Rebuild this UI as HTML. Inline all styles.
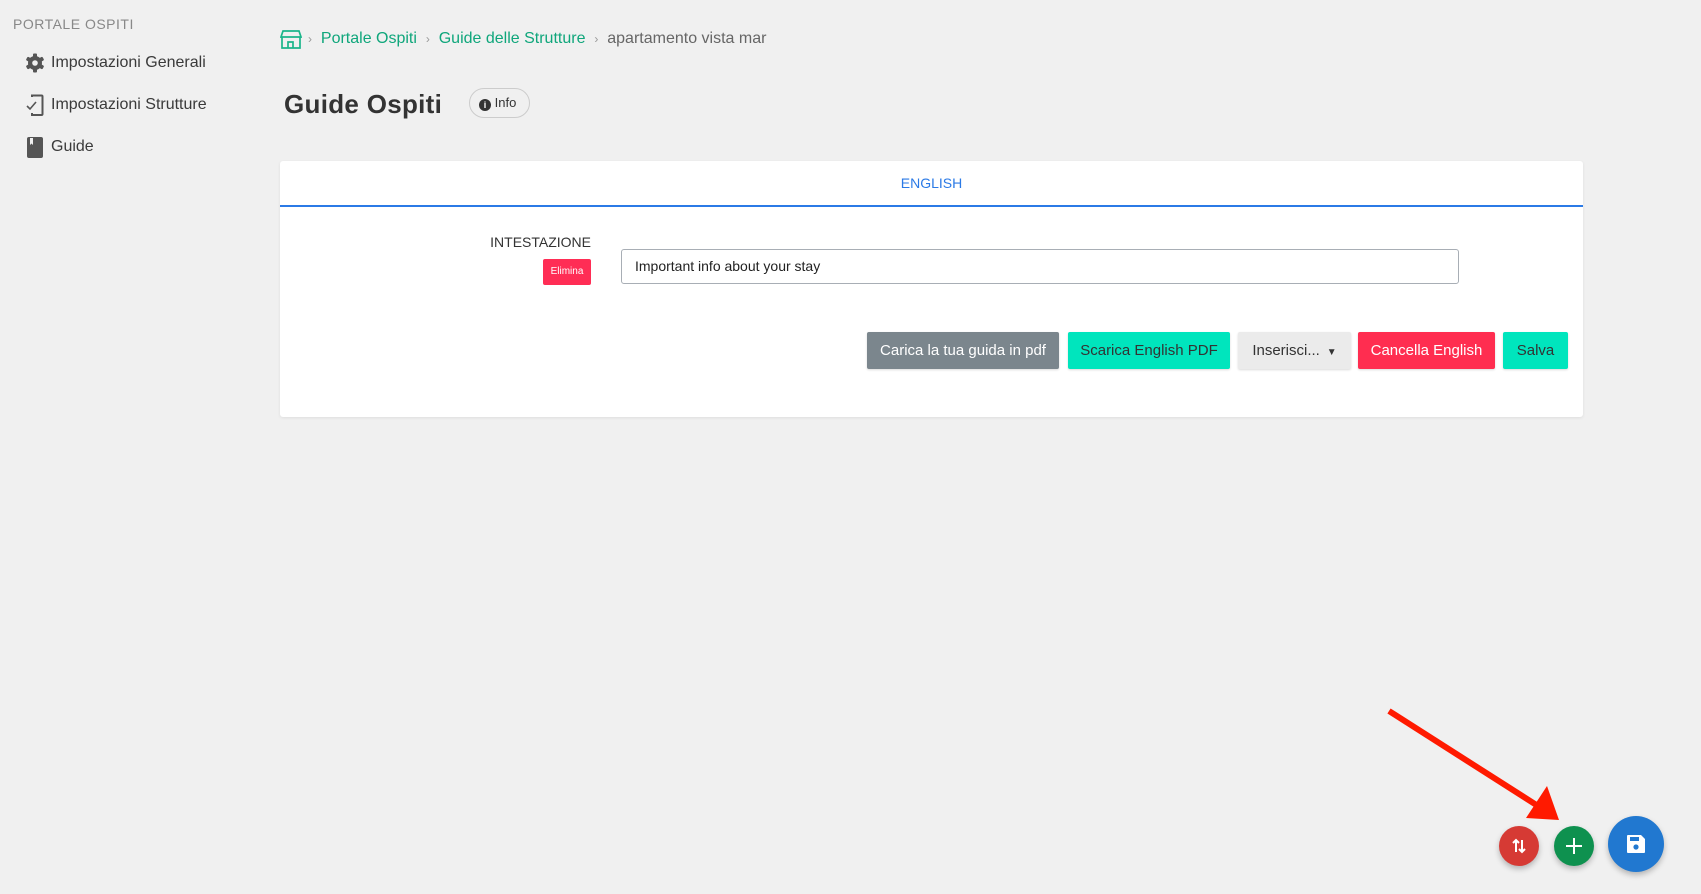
<!DOCTYPE html>
<html><head><meta charset="utf-8"><style>
*{box-sizing:border-box;margin:0;padding:0}
body{width:1701px;height:894px;background:#f0f0f0;font-family:"Liberation Sans",sans-serif;position:relative;overflow:hidden;color:#444}
.a{position:absolute}
.side{font-size:16px;color:#3a3a3a}
.btn{position:absolute;top:332px;height:37px;line-height:37px;text-align:center;font-size:15px;border-radius:2px;box-shadow:0 1px 2px rgba(0,0,0,.15)}
.fab{position:absolute;border-radius:50%;box-shadow:0 3px 6px rgba(0,0,0,.25);display:flex;align-items:center;justify-content:center}
</style></head><body>
<div class="a" style="left:13px;top:16px;font-size:14px;color:#888;letter-spacing:.5px">PORTALE OSPITI</div>
<svg class="a" style="left:25px;top:53px" width="20" height="20" viewBox="0 0 20 20"><g fill="#555"><circle cx="10" cy="10" r="7"/><rect x="8" y="0.5" width="4" height="19" rx="1"/><rect x="8" y="0.5" width="4" height="19" rx="1" transform="rotate(60 10 10)"/><rect x="8" y="0.5" width="4" height="19" rx="1" transform="rotate(120 10 10)"/></g><circle cx="10" cy="10" r="2.8" fill="#f0f0f0"/></svg>
<div class="a side" style="left:51px;top:54px">Impostazioni Generali</div>
<svg class="a" style="left:25px;top:94px" width="20" height="22" viewBox="0 0 20 22"><path d="M7 3V1.5h9.5a1 1 0 0 1 1 1V20a1 1 0 0 1-1 1H7V19" fill="none" stroke="#555" stroke-width="2"/><path d="M2 12l3 3 6-7" fill="none" stroke="#555" stroke-width="1.6"/></svg>
<div class="a side" style="left:51px;top:96px">Impostazioni Strutture</div>
<svg class="a" style="left:26px;top:137px" width="18" height="21" viewBox="0 0 18 21"><rect x="1" y="0" width="16" height="21" rx="2" fill="#555"/><path d="M4 1v7l1.5-1.5L7 8V1z" fill="#f0f0f0"/></svg>
<div class="a side" style="left:51px;top:138px">Guide</div>

<svg class="a" style="left:280px;top:30px" width="22" height="19" viewBox="0 0 22 19"><path d="M3 1h16l2 6H1z M2 7v11h18V7 M8 18v-6h5v6" fill="none" stroke="#1bb58a" stroke-width="1.7"/></svg>
<div class="a" style="top:30px;left:308px;font-size:16px;white-space:nowrap"><span style="color:#999;font-size:12px">›</span>&nbsp;&nbsp;<span style="color:#0fa67b">Portale Ospiti</span>&nbsp;&nbsp;<span style="color:#999;font-size:12px">›</span>&nbsp;&nbsp;<span style="color:#0fa67b">Guide delle Strutture</span>&nbsp;&nbsp;<span style="color:#999;font-size:12px">›</span>&nbsp;&nbsp;<span style="color:#666">apartamento vista mar</span></div>

<div class="a" style="left:284px;top:89px;font-size:26px;font-weight:bold;color:#333;letter-spacing:.3px">Guide Ospiti</div>
<div class="a" style="left:469px;top:88px;width:61px;height:30px;border:1px solid #ccc;border-radius:15px;font-size:13px;line-height:28px;padding-left:9px;color:#333"><span style="display:inline-block;width:12px;height:12px;border-radius:50%;background:#333;color:#fff;font-size:9px;line-height:12px;text-align:center;font-weight:bold;vertical-align:-1px">i</span> Info</div>

<div class="a" style="left:280px;top:161px;width:1303px;height:256px;background:#fff;border-radius:3px;box-shadow:0 1px 3px rgba(0,0,0,.08)">
 <div class="a" style="left:0;top:0;width:1303px;height:46px;border-bottom:2px solid #2b7ae6;text-align:center;line-height:45px;color:#2b7ae6;font-size:14px">ENGLISH</div>
 <div class="a" style="right:992px;top:73px;font-size:14px;color:#333">INTESTAZIONE</div>
 <div class="a" style="left:263px;top:98px;width:48px;height:26px;background:#ff2d55;color:#fff;font-size:10px;line-height:26px;text-align:center;border-radius:2px">Elimina</div>
 <div class="a" style="left:341px;top:88px;width:838px;height:35px;border:1px solid #a8aeb5;border-radius:3px;font-size:14px;line-height:33px;padding-left:13px;color:#222">Important info about your stay</div>
</div>
<div class="btn" style="left:867px;width:192px;background:#7b868d;color:#fff">Carica la tua guida in pdf</div>
<div class="btn" style="left:1068px;width:162px;background:#00e5bd;color:#333">Scarica English PDF</div>
<div class="btn" style="left:1238px;width:113px;background:#ebebeb;color:#333">Inserisci... <span style="font-size:10px">&nbsp;▼</span></div>
<div class="btn" style="left:1358px;width:137px;background:#ff2d50;color:#fff">Cancella English</div>
<div class="btn" style="left:1503px;width:65px;background:#00e5bd;color:#333">Salva</div>

<svg class="a" style="left:0;top:0" width="1701" height="894"><line x1="1389" y1="711" x2="1538" y2="806" stroke="#ff1a00" stroke-width="6"/><polygon points="1559,820 1526,818 1547,786" fill="#ff1a00"/></svg>
<div class="fab" style="left:1499px;top:826px;width:40px;height:40px;background:#d63a34"><svg width="16" height="18" viewBox="0 0 16 18"><path d="M5 15V3M2 6l3-3 3 3M11 3v12M8 12l3 3 3-3" fill="none" stroke="#fff" stroke-width="2"/></svg></div>
<div class="fab" style="left:1554px;top:826px;width:40px;height:40px;background:#0e914f"><svg width="18" height="18"><path d="M9 1v16M1 9h16" stroke="#fff" stroke-width="2"/></svg></div>
<div class="fab" style="left:1608px;top:816px;width:56px;height:56px;background:#2178d0"><svg width="20" height="20" viewBox="0 0 20 20"><path d="M1 2a1 1 0 0 1 1-1h13l4 4v13a1 1 0 0 1-1 1H2a1 1 0 0 1-1-1z" fill="#fff"/><rect x="4" y="3" width="9" height="4" fill="#2178d0"/><circle cx="10" cy="13" r="2.6" fill="#2178d0"/></svg></div>
</body></html>
